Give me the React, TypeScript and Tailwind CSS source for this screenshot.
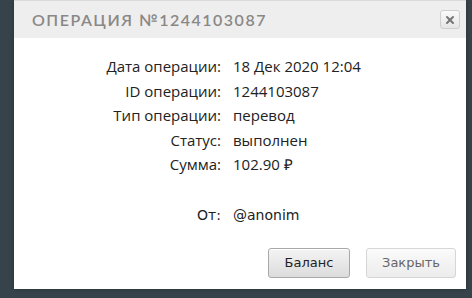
import { X } from 'lucide-react';

const rows: [string, string][] = [
    ["Дата операции:", "18 Дек 2020 12:04"],
    ["ID операции:", "1244103087"],
    ["Тип операции:", "перевод"],
    ["Статус:", "выполнен"],
    ["Сумма:", "102.90 ₽"],
];

export default function App() {
    return (
        <div className="w-[472px] h-[298px] bg-[#36434b] overflow-hidden">
            <div className="ml-[14px] w-[452px] h-[289px] bg-white flex flex-col shadow-[0_0_4px_rgba(0,0,0,0.3)]">
                <div className="h-[38px] bg-[#eeeeee] border-t border-[#d9d9d9] flex items-center justify-between pl-[18px] pr-[6px]">
                    <h3 className="text-[16px] tracking-[1.5px] text-[#8a8886] font-['Lato',sans-serif] font-semibold">
                        ОПЕРАЦИЯ №1244103087
                    </h3>
                    <button className="w-[20px] h-[19px] rounded-[3px] border border-[#cfcfcf] bg-gradient-to-b from-[#fafafa] to-[#e6e6e6] flex items-center justify-center text-[#777]">
                        <X size={12} strokeWidth={4} />
                    </button>
                </div>

                <div className="pt-[16px] grid grid-cols-[207px_1fr] gap-x-[12px] text-[15px] text-[#222] font-['Open_Sans',sans-serif] leading-[24.5px]">
                    {rows.map(([label, value]) => (
                        <div key={label} className="contents">
                            <span className="text-right">{label}</span>
                            <span>{value}</span>
                        </div>
                    ))}
                </div>

                <div className="mt-[26px] grid grid-cols-[207px_1fr] gap-x-[12px] text-[14px] text-[#222] font-['DejaVu_Sans',sans-serif] leading-[24px]">
                    <span className="text-right">От:</span>
                    <span>@anonim</span>
                </div>

                <div className="mt-auto mb-[11px] flex justify-end gap-[16px] pr-[10px] font-['DejaVu_Sans',sans-serif] text-[13px]">
                    <button className="w-[82px] h-[30px] rounded-[3px] border border-[#a8a8a8] bg-gradient-to-b from-[#f4f4f4] to-[#dcdcdc] text-[#222] shadow-[inset_0_1px_0_#fff]">
                        Баланс
                    </button>
                    <button className="w-[90px] h-[30px] rounded-[3px] border border-[#d6d6d6] bg-gradient-to-b from-[#fbfbfb] to-[#ececec] text-[#666]">
                        Закрыть
                    </button>
                </div>
            </div>
        </div>
    );
}
